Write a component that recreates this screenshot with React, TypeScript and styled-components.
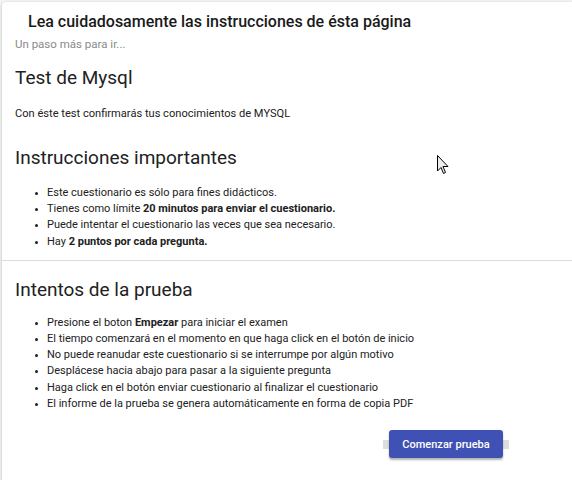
import React from "react";
import styled, { createGlobalStyle } from "styled-components";

const Global = createGlobalStyle`
  html, body { margin: 0; padding: 0; background: #f2f2f2; }
  body { font-family: Roboto, "Noto Sans", sans-serif; color: #212121; }
  * { box-sizing: border-box; }
`;

const Page = styled.div`
  position: relative;
  padding: 2px 0 0 2px;
  height: 480px;
  overflow: hidden;
`;

const Card = styled.div`
  background: #fff;
  border-radius: 4px 0 0 0;
  box-shadow: 0 1px 3px rgba(0, 0, 0, 0.25);
  height: 490px;
`;

const Header = styled.div`
  padding: 10px 13px 0 13px;
`;

const PageTitle = styled.h1`
  margin: 0 0 0 13px;
  font-size: 16px;
  font-weight: 500;
  line-height: 20px;
  color: #1a1a1a;
`;

const Subtitle = styled.div`
  margin-top: 5px;
  font-size: 11.5px;
  color: #8a8a8a;
  line-height: 14px;
`;

const Section = styled.section<{ $pt: number }>`
  padding: ${(p) => p.$pt}px 13px 0 13px;
`;

const Heading = styled.h2`
  margin: 0;
  font-size: 19px;
  font-weight: 400;
  line-height: 24px;
`;

const Paragraph = styled.p`
  margin: 16px 0 0 0;
  font-size: 11.1px;
  line-height: 16px;
`;

const List = styled.ul<{ $mt: number }>`
  margin: ${(p) => p.$mt}px 0 0 0;
  padding-left: 32px;
  font-size: 11px;
  line-height: 16.2px;
  li::marker { font-size: 9px; }
`;

const Spacer = styled.div`
  height: 10px;
`;

const Divider = styled.hr`
  margin: 0;
  border: 0;
  border-top: 1px solid #dcdcdc;
`;

const Actions = styled.div`
  display: flex;
  justify-content: flex-end;
  padding: 18px 69px 0 0;
`;

const ButtonWrap = styled.div`
  position: relative;
  z-index: 0;
`;

const Button = styled.button`
  position: relative;
  background: #3f51b5;
  color: #fff;
  border: 0;
  border-radius: 3px;
  width: 114px;
  height: 28px;
  font-family: Roboto, sans-serif;
  font-size: 11px;
  font-weight: 500;
  box-shadow: 0 2px 2px rgba(0, 0, 0, 0.3);
  &::before {
    content: "";
    position: absolute;
    left: -6px;
    right: -6px;
    top: 10px;
    height: 9px;
    background: #dedede;
    z-index: -1;
  }
`;

const Cursor = styled.svg`
  position: absolute;
  left: 437px;
  top: 155px;
`;

export default function App() {
  return (
    <>
      <Global />
      <Page>
        <Card>
          <Header>
            <PageTitle>Lea cuidadosamente las instrucciones de ésta página</PageTitle>
            <Subtitle>Un paso más para ir...</Subtitle>
          </Header>
          <Section $pt={15}>
            <Heading>Test de Mysql</Heading>
            <Paragraph>Con éste test confirmarás tus conocimientos de MYSQL</Paragraph>
          </Section>
          <Section $pt={24}>
            <Heading>Instrucciones importantes</Heading>
            <List $mt={15}>
              <li>Este cuestionario es sólo para fines didácticos.</li>
              <li>
                Tienes como límite <b>20 minutos para enviar el cuestionario.</b>
              </li>
              <li>Puede intentar el cuestionario las veces que sea necesario.</li>
              <li>
                Hay <b>2 puntos por cada pregunta.</b>
              </li>
            </List>
          </Section>
          <Spacer />
          <Divider />
          <Section $pt={17}>
            <Heading>Intentos de la prueba</Heading>
            <List $mt={13}>
              <li>
                Presione el boton <b>Empezar</b> para iniciar el examen
              </li>
              <li>El tiempo comenzará en el momento en que haga click en el botón de inicio</li>
              <li>No puede reanudar este cuestionario si se interrumpe por algún motivo</li>
              <li>Desplácese hacia abajo para pasar a la siguiente pregunta</li>
              <li>Haga click en el botón enviar cuestionario al finalizar el cuestionario</li>
              <li>El informe de la prueba se genera automáticamente en forma de copia PDF</li>
            </List>
          </Section>
          <Actions>
            <ButtonWrap>
              <Button>Comenzar prueba</Button>
            </ButtonWrap>
          </Actions>
        </Card>
        <Cursor width="12" height="20" viewBox="0 0 12 20">
          <path d="M0.5 0.5 L0.5 16 L4 12.5 L6.5 18.5 L8.5 17.5 L6 11.5 L11 11.5 Z" fill="#eee" stroke="#000" strokeWidth="1" />
        </Cursor>
      </Page>
    </>
  );
}
